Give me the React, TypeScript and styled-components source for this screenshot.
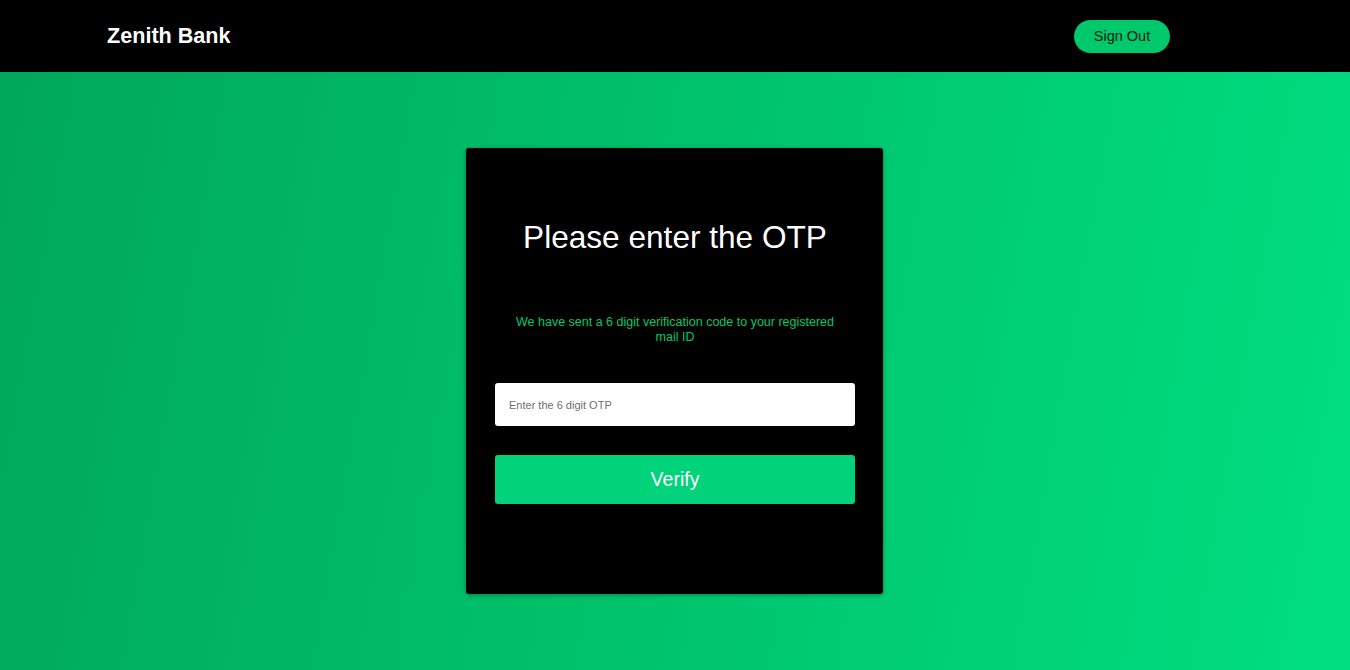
import React from "react";
import styled, { createGlobalStyle } from "styled-components";

const Global = createGlobalStyle`
  html, body { margin: 0; padding: 0; }
  body { font-family: "Liberation Sans", Arial, sans-serif; }
  * { box-sizing: border-box; }
`;

const Page = styled.div`
  min-height: 100vh;
  display: flex;
  flex-direction: column;
  background: linear-gradient(100deg, #00a75a 0%, #00c36c 50%, #00de81 100%);
`;

const Header = styled.header`
  height: 72px;
  background: #000;
  display: flex;
  align-items: center;
  justify-content: space-between;
  padding: 0 180px 0 107px;
`;

const Brand = styled.div`
  color: #fff;
  font-size: 21.6px;
  font-weight: 700;
`;

const SignOut = styled.button`
  width: 96px;
  height: 33px;
  border: none;
  border-radius: 17px;
  background: #00c96c;
  color: #0b1a12;
  font-family: "Liberation Sans", Arial, sans-serif;
  font-size: 14.5px;
  cursor: pointer;
`;

const Main = styled.main`
  flex: 1;
  display: flex;
  align-items: center;
  justify-content: center;
`;

const Card = styled.div`
  width: 417px;
  margin-right: 1px;
  background: #000;
  border-radius: 3px;
  box-shadow: 0 1px 4px rgba(0, 0, 0, 0.35);
  padding: 0 28px 90px 29px;
  display: flex;
  flex-direction: column;
  align-items: stretch;
`;

const Title = styled.h1`
  margin: 71px 0 0;
  font-size: 31.6px;
  line-height: 37px;
  font-weight: 400;
  color: #fff;
  text-align: center;
`;

const Sub = styled.p`
  margin: 59px 0 0;
  padding: 0 12px;
  font-size: 12.5px;
  line-height: 15px;
  color: #00c96a;
  text-align: center;
`;

const Input = styled.input`
  margin-top: 38px;
  height: 43px;
  width: 100%;
  border: none;
  border-radius: 3px;
  background: #fff;
  padding: 0 14px;
  font-family: "Liberation Sans", Arial, sans-serif;
  font-size: 11px;
  outline: none;
  &::placeholder { color: #6f6f6f; }
`;

const Verify = styled.button`
  margin-top: 29px;
  height: 49px;
  width: 100%;
  border: none;
  border-radius: 3px;
  background: #00d37a;
  color: #fff;
  font-family: "Liberation Sans", Arial, sans-serif;
  font-size: 19.5px;
  cursor: pointer;
`;

export default function App() {
  return (
    <>
      <Global />
      <Page>
        <Header>
          <Brand>Zenith Bank</Brand>
          <SignOut>Sign Out</SignOut>
        </Header>
        <Main>
          <Card>
            <Title>Please enter the OTP</Title>
            <Sub>We have sent a 6 digit verification code to your registered mail ID</Sub>
            <Input placeholder="Enter the 6 digit OTP" />
            <Verify>Verify</Verify>
          </Card>
        </Main>
      </Page>
    </>
  );
}
